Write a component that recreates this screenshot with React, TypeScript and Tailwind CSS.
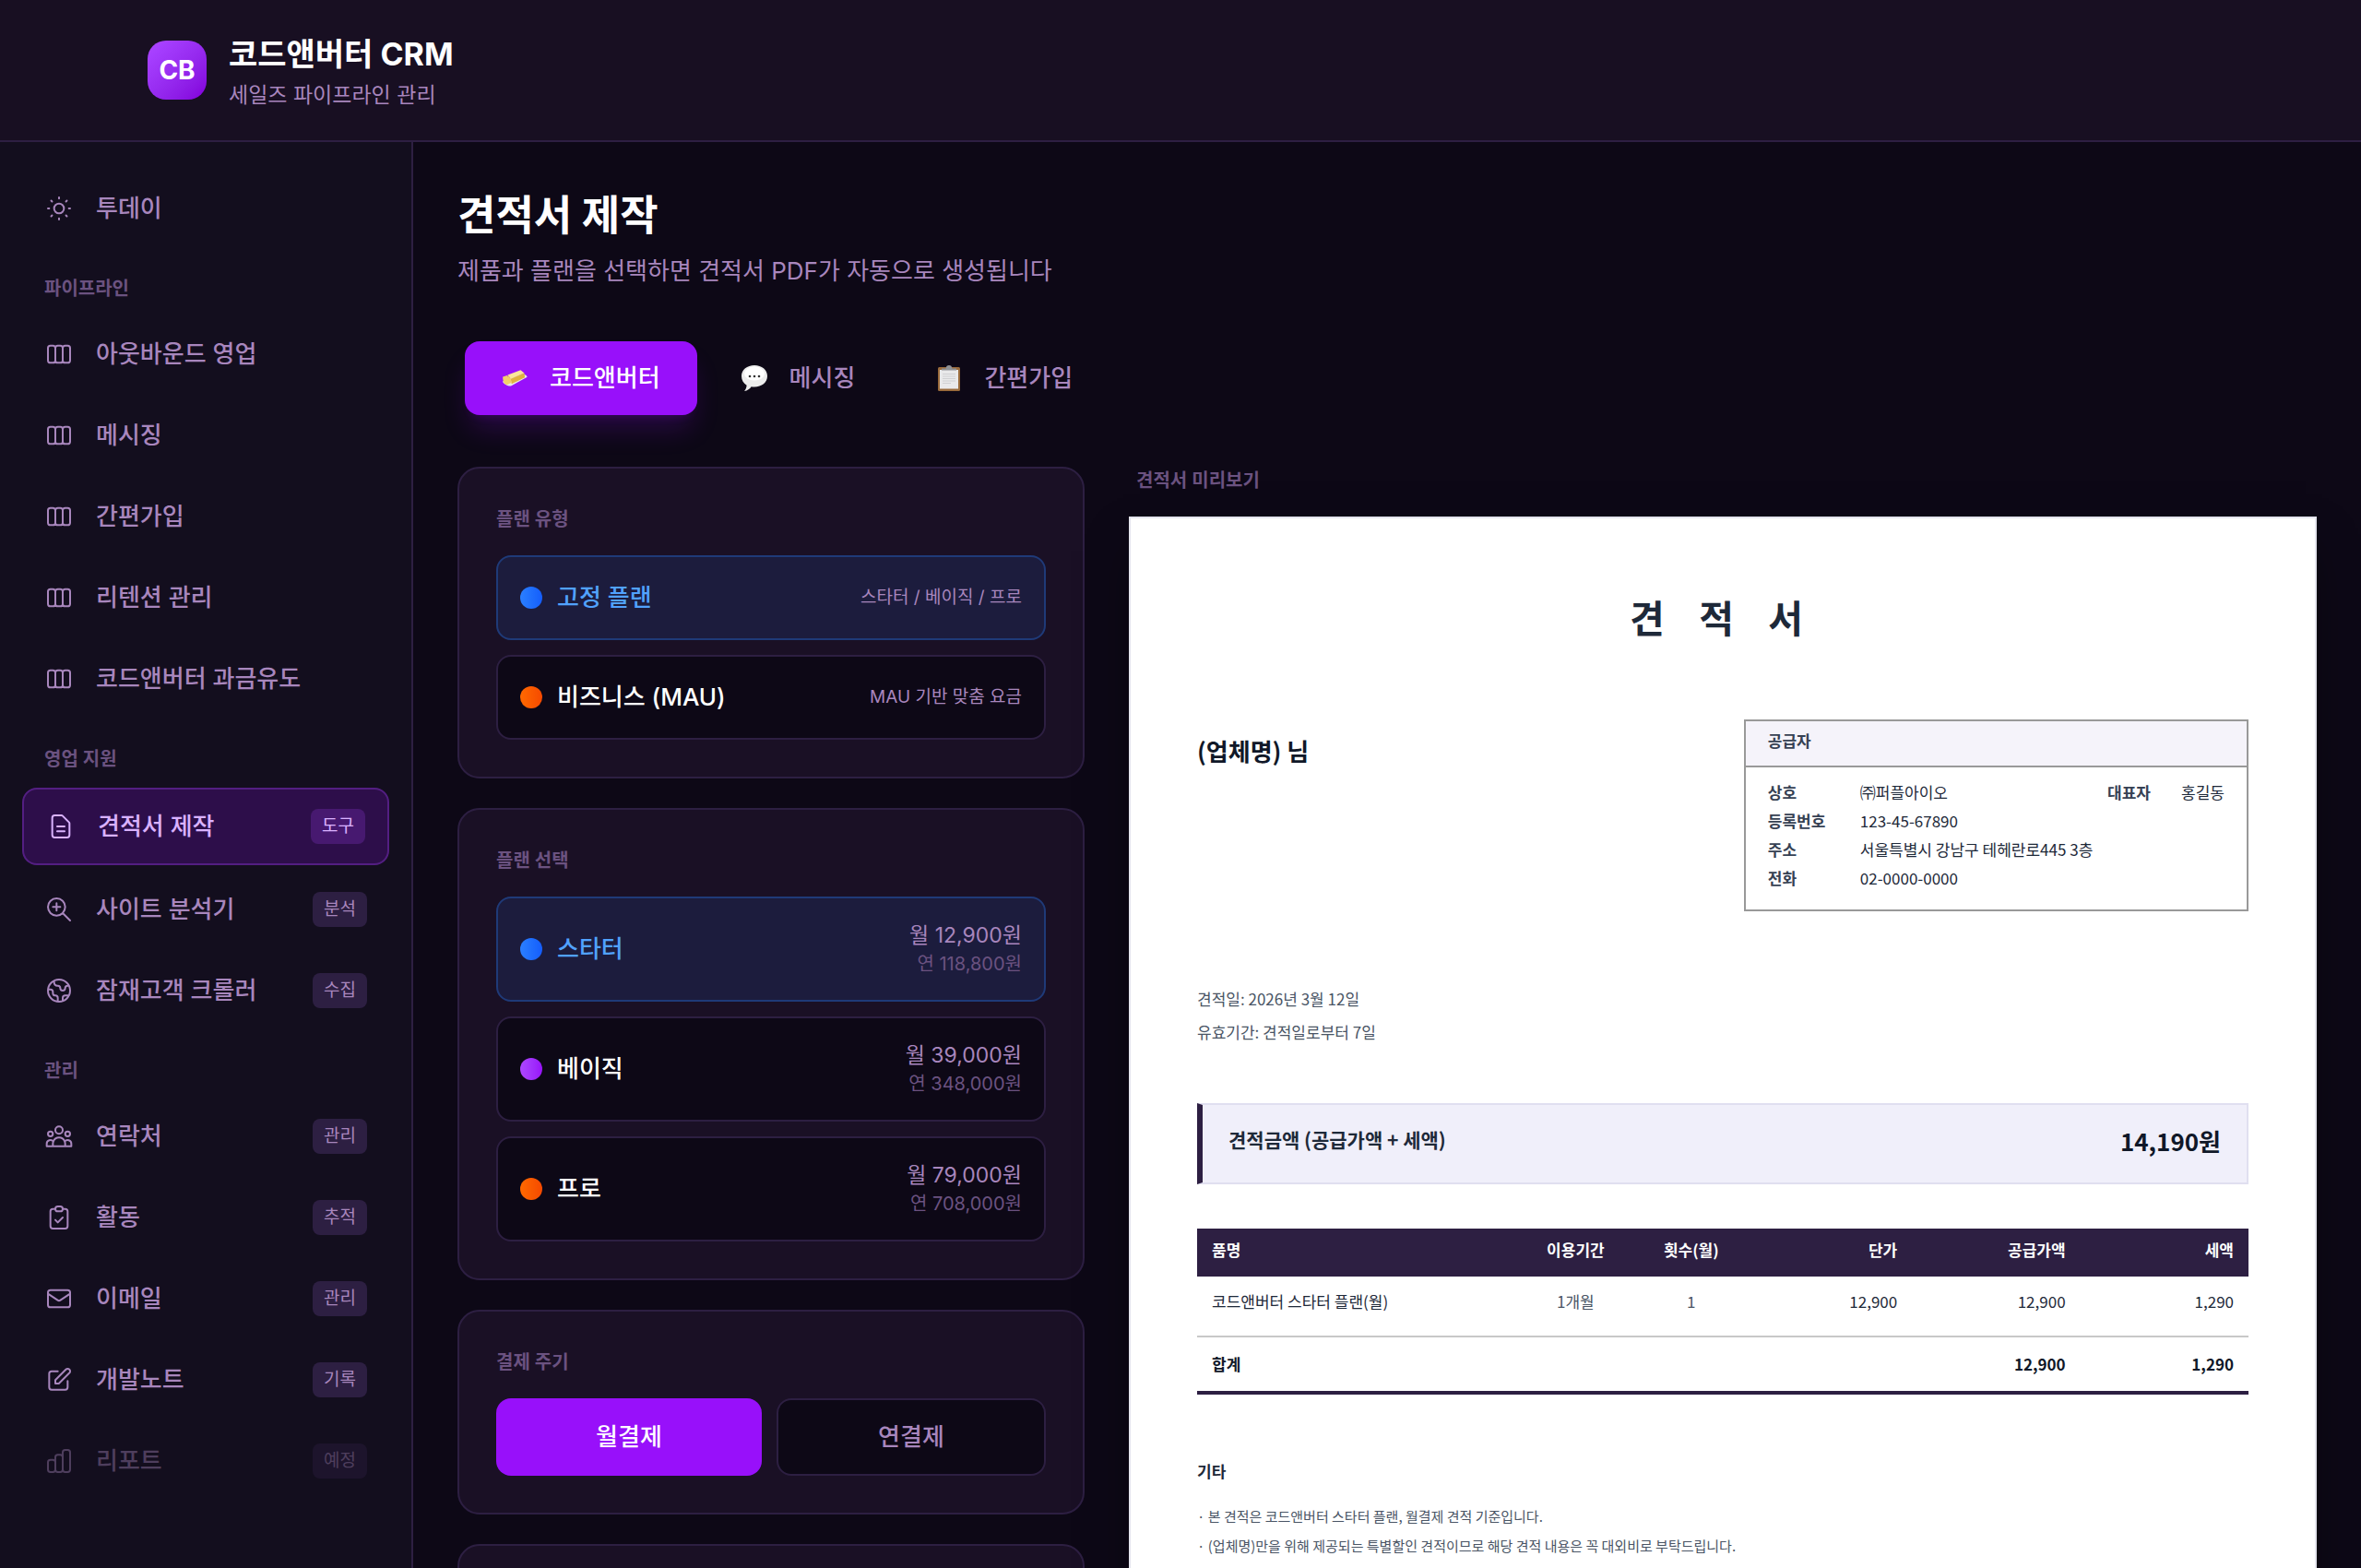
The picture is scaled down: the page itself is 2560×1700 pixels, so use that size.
import React, { useState } from 'react';
import type { ComponentType, ReactNode } from 'react';
import {
  HiOutlineSun,
  HiOutlineViewBoards,
  HiOutlineDocumentText,
  HiOutlineZoomIn,
  HiOutlineGlobe,
  HiOutlineUserGroup,
  HiOutlineClipboardCheck,
  HiOutlineMail,
  HiOutlinePencilAlt,
  HiOutlineChartBar,
} from 'react-icons/hi';

type Icon = ComponentType<{ className?: string }>;

type NavEntry = {
  label: string;
  icon: Icon;
  badge?: string;
  active?: boolean;
  disabled?: boolean;
};

const sections: { title?: string; items: NavEntry[] }[] = [
  { items: [{ label: '투데이', icon: HiOutlineSun }] },
  {
    title: '파이프라인',
    items: [
      { label: '아웃바운드 영업', icon: HiOutlineViewBoards },
      { label: '메시징', icon: HiOutlineViewBoards },
      { label: '간편가입', icon: HiOutlineViewBoards },
      { label: '리텐션 관리', icon: HiOutlineViewBoards },
      { label: '코드앤버터 과금유도', icon: HiOutlineViewBoards },
    ],
  },
  {
    title: '영업 지원',
    items: [
      { label: '견적서 제작', icon: HiOutlineDocumentText, badge: '도구', active: true },
      { label: '사이트 분석기', icon: HiOutlineZoomIn, badge: '분석' },
      { label: '잠재고객 크롤러', icon: HiOutlineGlobe, badge: '수집' },
    ],
  },
  {
    title: '관리',
    items: [
      { label: '연락처', icon: HiOutlineUserGroup, badge: '관리' },
      { label: '활동', icon: HiOutlineClipboardCheck, badge: '추적' },
      { label: '이메일', icon: HiOutlineMail, badge: '관리' },
      { label: '개발노트', icon: HiOutlinePencilAlt, badge: '기록' },
      { label: '리포트', icon: HiOutlineChartBar, badge: '예정', disabled: true },
    ],
  },
];

const plans = [
  { id: 'starter', name: '스타터', monthly: '12,900', yearly: '118,800', dot: 'from-[#2b7fff] to-[#155dfc]' },
  { id: 'basic', name: '베이직', monthly: '39,000', yearly: '348,000', dot: 'from-[#ad46ff] to-[#9810fa]' },
  { id: 'pro', name: '프로', monthly: '79,000', yearly: '708,000', dot: 'from-[#ff6900] to-[#f54900]' },
];

const planTypes = [
  { id: 'fixed', name: '고정 플랜', note: '스타터 / 베이직 / 프로', dot: 'from-[#2b7fff] to-[#155dfc]' },
  { id: 'business', name: '비즈니스 (MAU)', note: 'MAU 기반 맞춤 요금', dot: 'from-[#ff6900] to-[#f54900]' },
];

function ButterIcon() {
  return (
    <svg viewBox="0 0 28 28" className="size-7" aria-hidden="true">
      <path d="M1 17.5 22 9.5c2-.6 5.5 1.5 5.6 3.2L10.500 22.300c-2.500 1-8.500-1.500-9.500-4.800z" fill="#e8e6ea" />
      <path d="M1.200 12.500 6 11l4 8-4 2.200c-3-.5-5-3.200-4.800-8.700z" fill="#f3cf6b" />
      <path d="M6.500 10.500 20.500 5.200l4 3.300-14.700 6.300z" fill="#fbe59a" />
      <path d="M9.800 14.800 24.500 8.500l.6 4.700-14.300 7z" fill="#e0b33f" />
      <path d="m6.500 10.500 3.300 4.300 1 5.400-3.600-3.400z" fill="#f5cf62" />
    </svg>
  );
}

function BubbleIcon() {
  return (
    <svg viewBox="0 0 28 28" className="size-7" aria-hidden="true">
      <path
        d="M14 0c8 0 14 5 14 11.800s-6 11.700-14 11.700c-1.200 0-2.300-.1-3.400-.3C9 25.500 6.500 27.500 3 28c1.500-1.700 2.500-3.800 2.600-6.300C2 19.500 0 16 0 11.800 0 5 6 0 14 0z"
        fill="#ececec"
      />
      <ellipse cx="14" cy="9" rx="11" ry="7.500" fill="#fff" />
      <circle cx="9" cy="12" r="1.300" fill="#333" />
      <circle cx="14" cy="12" r="1.300" fill="#333" />
      <circle cx="19" cy="12" r="1.300" fill="#333" />
    </svg>
  );
}

function ClipboardIcon() {
  return (
    <svg viewBox="0 0 28 28" className="size-7" aria-hidden="true">
      <rect x="2" y="2" width="24" height="26" rx="1.500" fill="#9a6b3c" />
      <rect x="4" y="5" width="20" height="20.500" fill="#e9e9ea" />
      <path d="M7 9.500h14M7 12h14M7 14.500h14M7 17h14M7 19.500h9" stroke="#cfd0d2" />
      <path d="M6 5.500V3.500h4.500C11 1 12 0 14 0s3 1 3.500 3.500H22v2z" fill="#8f9296" />
    </svg>
  );
}

const tabs = [
  { id: 'codenbutter', label: '코드앤버터', icon: ButterIcon },
  { id: 'messaging', label: '메시징', icon: BubbleIcon },
  { id: 'signup', label: '간편가입', icon: ClipboardIcon },
];

function NavItem({ label, icon: ItemIcon, badge, active, disabled }: NavEntry) {
  const tone = active ? 'border-2 border-purple-500/30 bg-purple-600/20 text-purple-300' : 'text-[#a886bd]';

  return (
    <a
      href="#"
      aria-current={active ? 'page' : undefined}
      aria-disabled={disabled}
      className={`flex items-center gap-6 rounded-2xl px-6 py-5 ${tone} ${disabled ? 'opacity-40' : ''}`}
    >
      <ItemIcon className="size-8 shrink-0 [&_path]:[stroke-width:1.5]" />
      <span className="flex-1 text-[26px] leading-10 font-medium">{label}</span>
      {badge && (
        <span className={`rounded-lg px-3 py-1 text-[19px] leading-[30px] ${active ? 'bg-purple-500/20' : 'bg-[#2d1f42]'}`}>
          {badge}
        </span>
      )}
    </a>
  );
}

function Sidebar() {
  return (
    <aside className="w-112 shrink-0 overflow-hidden border-r-2 border-[#2d1f42] bg-[#130e1e] px-6 py-8">
      <nav>
        {sections.map((section) => (
          <div key={section.items[0].label}>
            {section.title && (
              <h3 className="mt-8 mb-4 px-6 text-[20px] leading-[30px] font-semibold text-[#6b5280]">{section.title}</h3>
            )}
            <div className="flex flex-col gap-2">
              {section.items.map((item) => (
                <NavItem key={item.label} {...item} />
              ))}
            </div>
          </div>
        ))}
      </nav>
    </aside>
  );
}

function Card({ title, children }: { title?: string; children?: ReactNode }) {
  return (
    <section className="min-h-24 rounded-3xl border-2 border-[#2d1f42] bg-[#1a1025] p-10">
      {title && <h3 className="mb-6 text-[20px] leading-[30px] font-semibold text-[#6b5280]">{title}</h3>}
      {children}
    </section>
  );
}

type OptionProps = {
  name: string;
  dot: string;
  selected: boolean;
  onSelect: () => void;
  children: ReactNode;
};

function Option({ name, dot, selected, onSelect, children }: OptionProps) {
  return (
    <button
      type="button"
      aria-pressed={selected}
      onClick={onSelect}
      className={`flex w-full items-center gap-4 rounded-2xl border-2 p-6 text-left ${
        selected ? 'border-[#1f3a78] bg-[#1c1c3d] text-[#51a2ff]' : 'border-[#2d1f42] bg-[#0d0816] text-white'
      }`}
    >
      <span className={`size-6 shrink-0 rounded-full bg-linear-to-r ${dot}`} />
      <span className="flex-1 text-[26px] leading-10 font-medium">{name}</span>
      {children}
    </button>
  );
}

function QuotePaper() {
  return (
    <article className="border-2 border-[#e5e5ee] bg-white px-18 pt-19 pb-18 font-['Noto_Sans_CJK_KR',sans-serif] text-[17px] text-gray-800 shadow-2xl shadow-black/50">
      <h2 className="text-center text-[41px] leading-[60px] font-bold tracking-[14px]">견 적 서</h2>

      <div className="mt-[82px] flex items-start justify-between">
        <p className="pt-[14px] text-[26px] leading-10 font-bold text-gray-900">(업체명) 님</p>
        <div className="w-[48%] border-2 border-[#999]">
          <h3 className="border-b-2 border-[#999] bg-[#f5f3fa] px-6 pt-2 pb-[14px] leading-[26px] font-bold text-gray-700">
            공급자
          </h3>
          <dl className="grid grid-cols-[100px_1fr_80px_auto] px-6 pt-[11px] pb-[19px] leading-[31px]">
            <dt className="font-bold text-gray-700">상호</dt>
            <dd>㈜퍼플아이오</dd>
            <dt className="font-bold text-gray-700">대표자</dt>
            <dd>홍길동</dd>
            <dt className="font-bold text-gray-700">등록번호</dt>
            <dd className="col-span-3">123-45-67890</dd>
            <dt className="font-bold text-gray-700">주소</dt>
            <dd className="col-span-3">서울특별시 강남구 테헤란로445 3층</dd>
            <dt className="font-bold text-gray-700">전화</dt>
            <dd className="col-span-3">02-0000-0000</dd>
          </dl>
        </div>
      </div>

      <div className="mt-[77px] leading-9 text-gray-600">
        <p>견적일: 2026년 3월 12일</p>
        <p>유효기간: 견적일로부터 7일</p>
      </div>

      <div className="mt-[59px] flex h-22 items-center justify-between border-2 border-l-[6px] border-[#e0dff0] border-l-[#2d1f42] bg-[#f0effa] px-7 pb-2 font-bold">
        <span className="text-[21px]">견적금액 (공급가액 + 세액)</span>
        <span className="text-[26px] text-gray-900">14,190원</span>
      </div>

      <table className="mt-12 w-full table-fixed border-separate border-spacing-0 leading-[26px]">
        <thead className="bg-[#2d1f42] text-white">
          <tr className="[&>th]:px-4 [&>th]:pt-[10px] [&>th]:pb-4">
            <th className="w-[30%] text-left">품명</th>
            <th className="w-[12%]">이용기간</th>
            <th className="w-[10%]">횟수(월)</th>
            <th className="w-[16%] text-right">단가</th>
            <th className="w-[16%] text-right">공급가액</th>
            <th className="w-[16%] text-right">세액</th>
          </tr>
        </thead>
        <tbody>
          <tr className="[&>td]:border-b-2 [&>td]:border-[#c8c8c8] [&>td]:px-4 [&>td]:pt-[14px] [&>td]:pb-6">
            <td>코드앤버터 스타터 플랜(월)</td>
            <td className="text-center text-gray-600">1개월</td>
            <td className="text-center text-gray-600">1</td>
            <td className="text-right">12,900</td>
            <td className="text-right">12,900</td>
            <td className="text-right">1,290</td>
          </tr>
        </tbody>
        <tfoot className="font-bold text-gray-900">
          <tr className="[&>td]:border-b-4 [&>td]:border-[#2d1f42] [&>td]:p-4">
            <td colSpan={4}>합계</td>
            <td className="text-right">12,900</td>
            <td className="text-right">1,290</td>
          </tr>
        </tfoot>
      </table>

      <h3 className="mt-[70px] leading-[26px] font-bold">기타</h3>
      <ul className="mt-5 text-[15px] leading-8 text-gray-600">
        <li>· 본 견적은 코드앤버터 스타터 플랜, 월결제 견적 기준입니다.</li>
        <li>· (업체명)만을 위해 제공되는 특별할인 견적이므로 해당 견적 내용은 꼭 대외비로 부탁드립니다.</li>
      </ul>
    </article>
  );
}

function App() {
  const [tab, setTab] = useState('codenbutter');
  const [planType, setPlanType] = useState('fixed');
  const [plan, setPlan] = useState('starter');
  const [cycle, setCycle] = useState('monthly');

  const cycleClass = (id: string) =>
    cycle === id ? 'bg-purple-600 text-white' : 'border-2 border-[#2d1f42] bg-[#0d0816] text-[#a886bd]';

  return (
    <div className="flex h-screen flex-col overflow-hidden bg-[#0d0816] font-[Inter,'Noto_Sans_CJK_KR',sans-serif] text-white">
      <header className="flex shrink-0 items-center gap-6 border-b-2 border-[#2d1f42] bg-[#180f22] px-40 py-8">
        <div className="flex size-16 items-center justify-center rounded-[20px] bg-linear-to-br from-purple-500 to-purple-700 text-[28px] font-bold">
          CB
        </div>
        <div>
          <h1 className="text-[34px] leading-[54px] font-bold">코드앤버터 CRM</h1>
          <p className="text-[23px] leading-[34px] text-[#a886bd]">세일즈 파이프라인 관리</p>
        </div>
      </header>

      <div className="flex min-h-0 flex-1">
        <Sidebar />
        <main className="flex-1 overflow-y-auto p-12 [scrollbar-width:none]">
          <h2 className="text-[45px] leading-16 font-bold">견적서 제작</h2>
          <p className="mt-2 text-[26px] leading-10 text-[#a886bd]">제품과 플랜을 선택하면 견적서 PDF가 자동으로 생성됩니다</p>

          <div className="mt-12 flex w-fit gap-2 p-2">
            {tabs.map(({ id, label, icon: TabIcon }) => (
              <button
                key={id}
                type="button"
                onClick={() => setTab(id)}
                className={`flex items-center gap-6 rounded-2xl px-10 py-5 text-[26px] leading-10 font-medium ${
                  tab === id ? 'bg-purple-600 text-white shadow-[0_20px_30px_-6px_#9810fa33,0_8px_12px_-8px_#9810fa33]' : 'text-[#a886bd]'
                }`}
              >
                <TabIcon />
                {label}
              </button>
            ))}
          </div>

          <div className="mt-12 grid grid-cols-[680px_1fr] gap-12">
            <div className="flex flex-col gap-8">
              <Card title="플랜 유형">
                <div className="flex flex-col gap-4">
                  {planTypes.map(({ id, name, note, dot }) => (
                    <Option key={id} name={name} dot={dot} selected={planType === id} onSelect={() => setPlanType(id)}>
                      <span className="text-[19px] leading-[30px] text-[#a886bd]">{note}</span>
                    </Option>
                  ))}
                </div>
              </Card>

              <Card title="플랜 선택">
                <div className="flex flex-col gap-4">
                  {plans.map(({ id, name, monthly, yearly, dot }) => (
                    <Option key={id} name={name} dot={dot} selected={plan === id} onSelect={() => setPlan(id)}>
                      <span className="text-right">
                        <span className="block text-[23px] leading-8 text-[#a886bd]">월 {monthly}원</span>
                        <span className="block text-[20px] leading-[30px] text-[#6b5280]">연 {yearly}원</span>
                      </span>
                    </Option>
                  ))}
                </div>
              </Card>

              <Card title="결제 주기">
                <div className="flex gap-4 text-[26px] leading-10 font-medium">
                  <button
                    type="button"
                    onClick={() => setCycle('monthly')}
                    className={`flex-1 rounded-2xl py-5 ${cycleClass('monthly')}`}
                  >
                    월결제
                  </button>
                  <button
                    type="button"
                    onClick={() => setCycle('yearly')}
                    className={`flex-1 rounded-2xl py-5 ${cycleClass('yearly')}`}
                  >
                    연결제
                  </button>
                </div>
              </Card>

              <Card />
            </div>

            <div>
              <h3 className="mb-6 px-2 text-[20px] leading-[30px] font-semibold text-[#6b5280]">견적서 미리보기</h3>
              <QuotePaper />
            </div>
          </div>
        </main>
      </div>
    </div>
  );
}

export default App;
